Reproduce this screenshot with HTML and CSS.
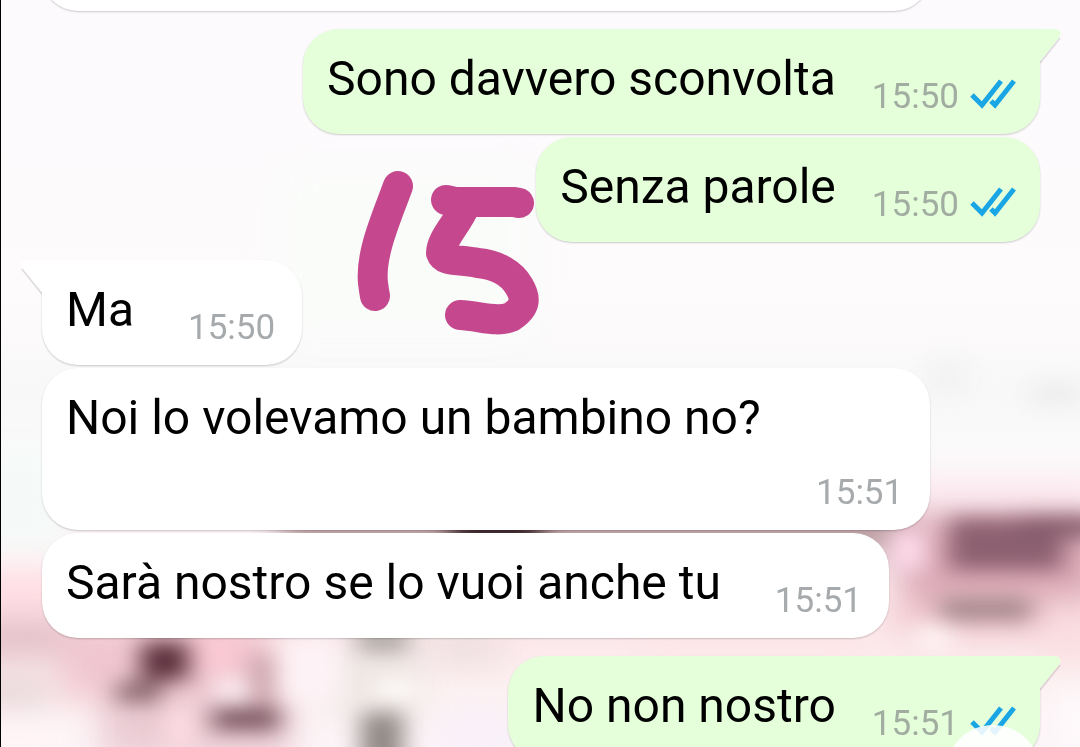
FILE: index.html
```
<!DOCTYPE html>
<html lang="it">
<head>
    <meta charset="UTF-8">
    <meta name="viewport" content="width=device-width, initial-scale=1.0">
    <title>Chat</title>
    <link rel="stylesheet" href="styles.css">
</head>
<body>

    <!-- Wallpaper -->
    <svg class="wallpaper" viewBox="0 0 1080 747" preserveAspectRatio="none" aria-hidden="true">
        <defs>
            <linearGradient id="base" x1="0" y1="0" x2="0" y2="1">
                <stop offset="0" stop-color="#fcfafc"/>
                <stop offset="0.4" stop-color="#fdfbfc"/>
                <stop offset="0.52" stop-color="#f9f8f9"/>
                <stop offset="0.62" stop-color="#fbfafb"/>
                <stop offset="0.75" stop-color="#fdf0f3"/>
                <stop offset="0.82" stop-color="#fbe3e7"/>
                <stop offset="0.92" stop-color="#fdf1f2"/>
                <stop offset="1" stop-color="#fcf5f8"/>
            </linearGradient>
            <filter id="soft" x="-50%" y="-100%" width="200%" height="300%" color-interpolation-filters="sRGB"><feGaussianBlur stdDeviation="16"/></filter>
            <filter id="small" x="-50%" y="-100%" width="200%" height="300%" color-interpolation-filters="sRGB"><feGaussianBlur stdDeviation="12 10"/></filter>
        </defs>
        <rect width="1080" height="747" fill="url(#base)"/>
        <g filter="url(#soft)">
            <rect x="-40" y="450" width="110" height="100" fill="#f5faf8"/>
            <rect x="280" y="170" width="250" height="170" fill="#fafcfa"/>
            <rect x="-40" y="578" width="320" height="35" fill="#ffdce3"/>
            <rect x="-40" y="622" width="160" height="34" fill="#dfbbc4"/>
            <rect x="60" y="625" width="210" height="75" fill="#f0c6d0"/>
            <rect x="-40" y="682" width="90" height="20" fill="#dcc7ca"/>
            <rect x="100" y="690" width="190" height="70" fill="#ebcbd3"/>
            <rect x="-40" y="720" width="110" height="40" fill="#fff5f6"/>
            <rect x="330" y="650" width="90" height="60" fill="#eee7e4"/>
            <rect x="430" y="640" width="70" height="20" fill="#e6d9d9"/>
            <rect x="440" y="715" width="80" height="40" fill="#f7eff9"/>
            <rect x="280" y="505" width="620" height="50" fill="#b89a9f"/>
            <rect x="900" y="515" width="200" height="85" fill="#dba9b6"/>
            <rect x="900" y="480" width="200" height="25" fill="#fde6ee"/>
            <rect x="900" y="600" width="200" height="34" fill="#f0c8cf"/>
            <rect x="640" y="640" width="220" height="14" fill="#fde2e5"/>
            <rect x="1040" y="600" width="60" height="60" fill="#fadde1"/>
            <rect x="1050" y="690" width="60" height="60" fill="#fdf9fb"/>
        </g>
        <g filter="url(#small)">
            <rect x="890" y="530" width="34" height="40" fill="#ffdcec"/>
            <rect x="948" y="518" width="114" height="52" fill="#8c6070"/>
            <rect x="1020" y="516" width="80" height="22" fill="#845a6a"/>
            <rect x="940" y="598" width="90" height="22" fill="#a2858a"/>
            <rect x="915" y="626" width="36" height="24" fill="#fff5f5"/>
            <rect x="140" y="642" width="48" height="38" fill="#5a2f3b"/>
            <rect x="116" y="682" width="44" height="20" fill="#84626b"/>
            <rect x="190" y="630" width="55" height="40" fill="#f8c8d3"/>
            <rect x="216" y="678" width="32" height="24" fill="#fff0f5"/>
            <rect x="250" y="655" width="20" height="50" fill="#c39ba4"/>
            <rect x="212" y="709" width="66" height="20" fill="#6c4852"/>
            <rect x="166" y="706" width="26" height="44" fill="#ffdde5"/>
            <rect x="356" y="628" width="52" height="24" fill="#aaa4a1"/>
            <rect x="360" y="712" width="42" height="60" fill="#8e8783"/>
            <rect x="285" y="640" width="55" height="60" fill="#fdf2f6"/>
            <rect x="378" y="680" width="34" height="20" fill="#fffdfb"/>
            <rect x="930" y="360" width="34" height="34" fill="#f1f1f2"/>
            <rect x="1030" y="384" width="50" height="20" fill="#ebebec"/>
            <rect x="450" y="518" width="90" height="28" fill="#2c171c"/>
        </g>
    </svg>

    <!-- Messages -->
    <main class="chat">
        <div class="bubble incoming long"></div>

        <div class="bubble outgoing first">
            <svg class="tail" viewBox="0 0 24 36" aria-hidden="true"><path class="edge" d="M22 9L2 34"/><path d="M0 0H18Q25 2 21 9L2 32V34H0Z"/></svg>
            <p class="text">Sono davvero sconvolta</p>
            <div class="meta">
                <time>15:50</time>
                <svg class="ticks" viewBox="0 0 46 30" role="img" aria-label="Letto"><path d="M2 16L12 26L31 2M21 22L25 26L44 2"/></svg>
            </div>
        </div>

        <div class="bubble outgoing">
            <p class="text">Senza parole</p>
            <div class="meta">
                <time>15:50</time>
                <svg class="ticks" viewBox="0 0 46 30" role="img" aria-label="Letto"><path d="M2 16L12 26L31 2M21 22L25 26L44 2"/></svg>
            </div>
        </div>

        <div class="bubble incoming first">
            <svg class="tail" viewBox="0 0 24 36" aria-hidden="true"><path class="edge" d="M2 9L22 34"/><path d="M24 0H6Q-1 2 3 9L22 32V34H24Z"/></svg>
            <p class="text">Ma</p>
            <div class="meta"><time>15:50</time></div>
        </div>

        <div class="bubble incoming long">
            <p class="text">Noi lo volevamo un bambino no?</p>
            <div class="meta"><time>15:51</time></div>
        </div>

        <div class="bubble incoming">
            <p class="text">Sarà nostro se lo vuoi anche tu</p>
            <div class="meta"><time>15:51</time></div>
        </div>

        <div class="bubble outgoing first">
            <svg class="tail" viewBox="0 0 24 36" aria-hidden="true"><path class="edge" d="M22 9L2 34"/><path d="M0 0H18Q25 2 21 9L2 32V34H0Z"/></svg>
            <p class="text">No non nostro</p>
            <div class="meta">
                <time>15:51</time>
                <svg class="ticks" viewBox="0 0 46 30" role="img" aria-label="Letto"><path d="M2 16L12 26L31 2M21 22L25 26L44 2"/></svg>
            </div>
        </div>
    </main>

    <!-- Hand drawn number -->
    <svg class="doodle" viewBox="350 160 200 190" role="img" aria-label="15">
        <path d="M398 186C386 219 370 254 373 283Q374 291 375 296"/>
        <path d="M446 200L455 202H514L519 203M464 208C458 223 441 239 441 253C444 262 458 259 478 263C498 265 512 274 519 286C528 301 523 309 511 317C497 323 480 316 460 315"/>
    </svg>

    <button class="scroll-down" aria-label="Vai in fondo"></button>

</body>
</html>
```

FILE: styles.css
```
* {
    box-sizing: border-box;
}

body {
    font-family: Roboto, 'Liberation Sans', sans-serif;
    margin: 0;
    height: 100vh;
    overflow: hidden;
    border-left: 1px solid #000;
    color: #000;
}

.wallpaper {
    position: fixed;
    top: 0;
    left: 1px;
    width: 100%;
    height: 100%;
    z-index: -1;
}

/* scrolled so that the first message is almost out of view */
.chat {
    display: flex;
    flex-direction: column;
    gap: 3px;
    padding: 0 40px 0 41px;
    margin-top: -151px;
}

.bubble {
    position: relative;
    display: flex;
    padding: 22px 24px 16px;
    border-radius: 36px;
    box-shadow: 0 1px 2px rgba(0, 0, 0, 0.2);
}

.incoming {
    align-self: flex-start;
    gap: 54px;
    padding-right: 27px;
    background-color: #fff;
}

.outgoing {
    align-self: flex-end;
    gap: 36px;
    background-color: #e5ffdb;
}

.first {
    margin-top: 15px;
}

.incoming.first {
    border-top-left-radius: 0;
}

.outgoing.first {
    border-top-right-radius: 0;
}

.long {
    flex-direction: column;
    gap: 15px;
    width: 89%;
    min-height: 162px;
}

.text {
    margin: 0 0 11px;
    font-size: 48px;
    line-height: 56px;
}

.meta {
    display: flex;
    align-items: center;
    align-self: flex-end;
    gap: 11px;
    color: #a6aaac;
    font-size: 35px;
    line-height: 42px;
}

.outgoing .meta {
    color: #a2ada1;
}

.ticks {
    width: 46px;
    height: 30px;
    margin-bottom: 6px;
    fill: none;
    stroke: #1aa6e4;
    stroke-width: 5;
}

.tail {
    position: absolute;
    top: 0;
    width: 24px;
    height: 36px;
}

.incoming .tail {
    right: 100%;
    margin-right: -2px;
    fill: #fff;
}

.outgoing .tail {
    left: 100%;
    margin-left: -2px;
    fill: #e5ffdb;
}

.edge {
    stroke: rgba(0, 0, 0, 0.12);
    stroke-width: 2;
}

.doodle {
    position: absolute;
    top: 160px;
    left: 350px;
    width: 200px;
    height: 190px;
    fill: none;
    stroke: #c5488f;
    stroke-width: 30;
    stroke-linecap: round;
    stroke-linejoin: round;
}

.scroll-down {
    position: fixed;
    right: 40px;
    bottom: -72px;
    width: 94px;
    height: 94px;
    border: none;
    border-radius: 50%;
    background-color: rgba(255, 255, 255, 0.88);
    cursor: pointer;
}
```
